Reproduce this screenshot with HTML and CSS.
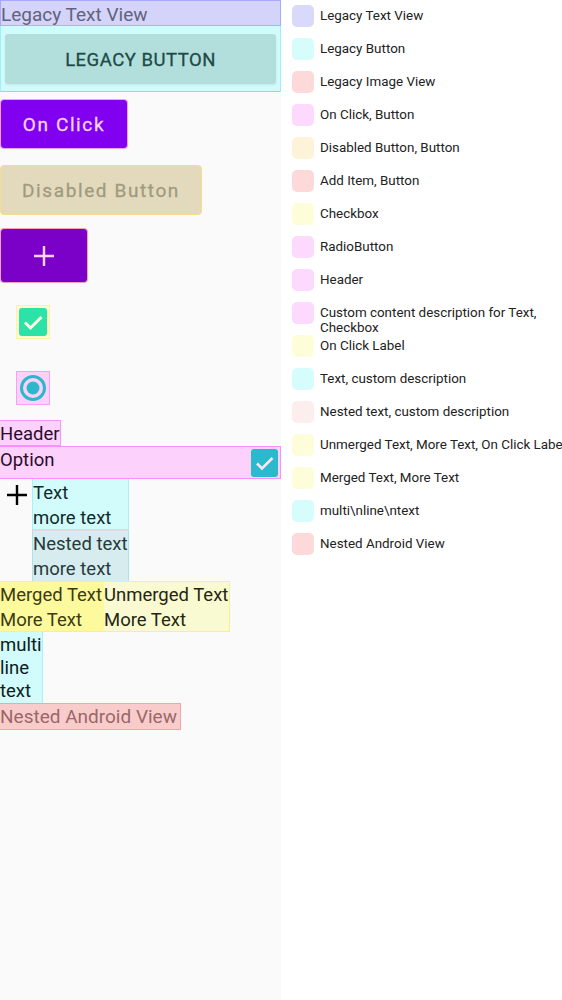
FILE: index.html
```html
<!DOCTYPE html>
<html>
<head>
<meta charset="utf-8">
<link rel="stylesheet" href="styles.css">
</head>
<body>
<div class="page">
  <div class="canvas">
    <div class="legacy-text">Legacy Text View</div>
    <div class="legacy-btn-wrap"><div class="legacy-btn">LEGACY BUTTON</div></div>
    <div class="btn btn-click">On Click</div>
    <div class="btn btn-disabled">Disabled Button</div>
    <div class="btn btn-add">
      <svg width="20" height="20" viewBox="0 0 20 20"><path d="M10 0V20M0 10H20" stroke="#ffd6f4" stroke-width="2.4" fill="none"/></svg>
    </div>
    <div class="check-wrap">
      <svg width="28" height="28" viewBox="0 0 28 28"><rect x="0" y="0" width="28" height="28" rx="3" fill="#2de2a6"/><path d="M6 14.5L11.5 20L22.5 9" stroke="#fffbe4" stroke-width="3" fill="none"/></svg>
    </div>
    <div class="radio-wrap">
      <svg width="28" height="28" viewBox="0 0 28 28"><circle cx="14" cy="14" r="11.5" stroke="#2bb8cd" stroke-width="3" fill="none"/><circle cx="14" cy="14" r="6.5" fill="#2bb8cd"/></svg>
    </div>
    <div class="header">Header</div>
    <div class="option">
      <span class="option-label">Option</span>
      <svg class="option-check" width="27" height="28" viewBox="0 0 27 28"><rect x="0" y="0" width="27" height="28" rx="3" fill="#2bb9cd"/><path d="M6 14.5L11 19.5L21.5 9" stroke="#fde6fd" stroke-width="2.6" fill="none"/></svg>
    </div>
    <div class="text-row">
      <svg class="plus" width="20" height="20" viewBox="0 0 20 20"><path d="M10 0V20M0 10H20" stroke="#000" stroke-width="2.4" fill="none"/></svg>
      <div class="text-col">
        <div class="cyan-block">Text<br>more text</div>
        <div class="nested-block">Nested text<br>more text</div>
      </div>
    </div>
    <div class="merged-row">
      <div class="merged">Merged Text<br>More Text</div>
      <div class="unmerged">Unmerged Text<br>More Text</div>
    </div>
    <div class="multi">multi<br>line<br>text</div>
    <div class="android">Nested Android View</div>
  </div>
  <div class="legend">
    <div class="item"><span class="sw c-lav"></span><span class="lbl">Legacy Text View</span></div>
    <div class="item"><span class="sw c-cyan"></span><span class="lbl">Legacy Button</span></div>
    <div class="item"><span class="sw c-red"></span><span class="lbl">Legacy Image View</span></div>
    <div class="item"><span class="sw c-pink"></span><span class="lbl">On Click, Button</span></div>
    <div class="item"><span class="sw c-orange"></span><span class="lbl">Disabled Button, Button</span></div>
    <div class="item"><span class="sw c-red"></span><span class="lbl">Add Item, Button</span></div>
    <div class="item"><span class="sw c-yellow"></span><span class="lbl">Checkbox</span></div>
    <div class="item"><span class="sw c-pink"></span><span class="lbl">RadioButton</span></div>
    <div class="item"><span class="sw c-pink"></span><span class="lbl">Header</span></div>
    <div class="item"><span class="sw c-pink"></span><span class="lbl">Custom content description for Text,<br>Checkbox</span></div>
    <div class="item"><span class="sw c-yellow"></span><span class="lbl">On Click Label</span></div>
    <div class="item"><span class="sw c-cyan"></span><span class="lbl">Text, custom description</span></div>
    <div class="item"><span class="sw c-rose"></span><span class="lbl">Nested text, custom description</span></div>
    <div class="item"><span class="sw c-yellow"></span><span class="lbl">Unmerged Text, More Text, On Click Label</span></div>
    <div class="item"><span class="sw c-yellow"></span><span class="lbl">Merged Text, More Text</span></div>
    <div class="item"><span class="sw c-cyan"></span><span class="lbl">multi\nline\ntext</span></div>
    <div class="item"><span class="sw c-red"></span><span class="lbl">Nested Android View</span></div>
  </div>
</div>
</body>
</html>
```
FILE: styles.css
```css
html, body {
  margin: 0;
  padding: 0;
  background: #ffffff;
  overflow: hidden;
}
.page {
  display: flex;
  width: 562px;
  height: 1000px;
  font-family: Roboto, "Liberation Sans", sans-serif;
}
.canvas {
  width: 281px;
  flex: none;
  background: #fafafa;
  display: flex;
  flex-direction: column;
  align-items: flex-start;
  font-size: 18.5px;
  color: #1c1c1c;
}
.legacy-text {
  box-sizing: border-box;
  width: 281px;
  height: 26px;
  background: #d4d4fa;
  border: 1px solid #a8a8fc;
  border-bottom-color: #8cc4f0;
  color: #62627c;
  font-size: 19px;
  line-height: 27px;
  white-space: nowrap;
}
.legacy-btn-wrap {
  box-sizing: border-box;
  width: 281px;
  height: 66px;
  background: #d2fafa;
  border-left: 1px solid #9cf0fc;
  border-right: 1px solid #9cf0fc;
  border-bottom: 1px solid #dcbcae;
  padding: 8px 4px 7px 4px;
}
.legacy-btn {
  height: 50px;
  background: #b2dfdc;
  border-radius: 3px;
  box-shadow: 0 1px 2px rgba(0,0,0,0.08);
  color: #1e4a46;
  font-size: 18.5px;
  font-weight: 400;
  letter-spacing: 0.5px;
  line-height: 52px;
  text-align: center;
  -webkit-text-stroke: 0.3px #1e4a46;
}
.btn {
  box-sizing: border-box;
  display: flex;
  align-items: center;
  justify-content: center;
  border-radius: 4px;
  font-weight: 400;
  letter-spacing: 1.6px;
  font-size: 19px;
}
.btn-click {
  margin-top: 7px;
  width: 128px;
  height: 50px;
  background: #8000ef;
  border: 1px solid #f0a0f8;
  color: #f8d4fc;
  -webkit-text-stroke: 0.3px #f8d4fc;
}
.btn-disabled {
  margin-top: 16px;
  width: 202px;
  height: 50px;
  background: #e3dabd;
  border: 1px solid #f6dc8c;
  color: #a09a7f;
  -webkit-text-stroke: 0.3px #a09a7f;
}
.btn-add {
  margin-top: 13px;
  width: 88px;
  height: 55px;
  background: #7b00c8;
  border: 1px solid #f2a4b4;
}
.check-wrap, .radio-wrap {
  box-sizing: border-box;
  width: 34px;
  height: 34px;
  margin-left: 16px;
  display: flex;
  align-items: center;
  justify-content: center;
}
.check-wrap {
  margin-top: 22px;
  background: #fdfbd0;
  border: 1px solid #fbf4a0;
}
.radio-wrap {
  margin-top: 32px;
  background: #fcd2fc;
  border: 1px solid #f6a0f6;
}
.header {
  box-sizing: border-box;
  margin-top: 15px;
  height: 26px;
  background: #fcd2fc;
  border: 1px solid #fb90fb;
  border-left: none;
  line-height: 27px;
  color: #2a0c2a;
  white-space: nowrap;
}
.option {
  box-sizing: border-box;
  width: 281px;
  height: 33px;
  background: #fcd2fc;
  border: 1px solid #fb90fb;
  border-left: none;
  display: flex;
  align-items: flex-start;
  justify-content: space-between;
  padding-right: 2px;
  color: #2a0c2a;
}
.option-label {
  line-height: 27px;
}
.option-check {
  margin-top: 2px;
}
.text-row {
  display: flex;
  align-items: flex-start;
}
.plus {
  margin: 6px 5px 0 7px;
}
.text-col {
  display: flex;
  flex-direction: column;
  width: 97px;
}
.cyan-block {
  box-sizing: border-box;
  height: 51px;
  padding-top: 2px;
  background: #d2fbfb;
  border: 1px solid #a8f0fc;
  border-top: none;
  line-height: 25px;
  color: #0f2a2a;
  white-space: nowrap;
}
.nested-block {
  box-sizing: border-box;
  height: 51px;
  padding-top: 1px;
  background: #d6ecee;
  border-left: 1px solid #a8e4ec;
  border-right: 1px solid #a8e4ec;
  border-top: 1px solid #dcdcdc;
  line-height: 25px;
  color: #263a3c;
  white-space: nowrap;
}
.merged-row {
  display: flex;
}
.merged, .unmerged {
  box-sizing: border-box;
  height: 51px;
  padding-top: 1px;
  line-height: 25px;
  white-space: nowrap;
  border-top: 1px solid #f8f088;
  border-bottom: 1px solid #f8f088;
}
.merged {
  width: 104px;
  background: #fdfa9e;
  color: #3c3a10;
}
.unmerged {
  width: 126px;
  background: #fafad2;
  color: #262610;
  border-right: 1px solid #f8f088;
}
.multi {
  box-sizing: border-box;
  width: 43px;
  height: 71px;
  padding-top: 2px;
  background: #d2fbfb;
  border-right: 1px solid #a8f0fc;
  line-height: 23px;
  color: #0c1c1c;
}
.android {
  box-sizing: border-box;
  width: 181px;
  height: 27px;
  background: #f9cccc;
  border: 1px solid #f3a6a6;
  border-left: none;
  color: #996868;
  font-size: 19px;
  line-height: 26px;
  white-space: nowrap;
}
.legend {
  flex: 1;
  background: #ffffff;
  padding: 5px 0 0 11px;
  overflow: hidden;
}
.item {
  display: flex;
  align-items: flex-start;
}
.sw {
  flex: none;
  width: 22px;
  height: 22px;
  border-radius: 5px;
  margin-bottom: 11px;
}
.lbl {
  margin-left: 6px;
  padding-top: 3px;
  font-size: 13.4px;
  line-height: 15px;
  color: #222222;
  white-space: nowrap;
}
.c-lav { background: #d9d9fc; }
.c-cyan { background: #d6fcfc; }
.c-red { background: #fdd9d9; }
.c-pink { background: #fdd9fd; }
.c-orange { background: #fdf3d9; }
.c-yellow { background: #fdfdd9; }
.c-rose { background: #fdeeee; }
```
